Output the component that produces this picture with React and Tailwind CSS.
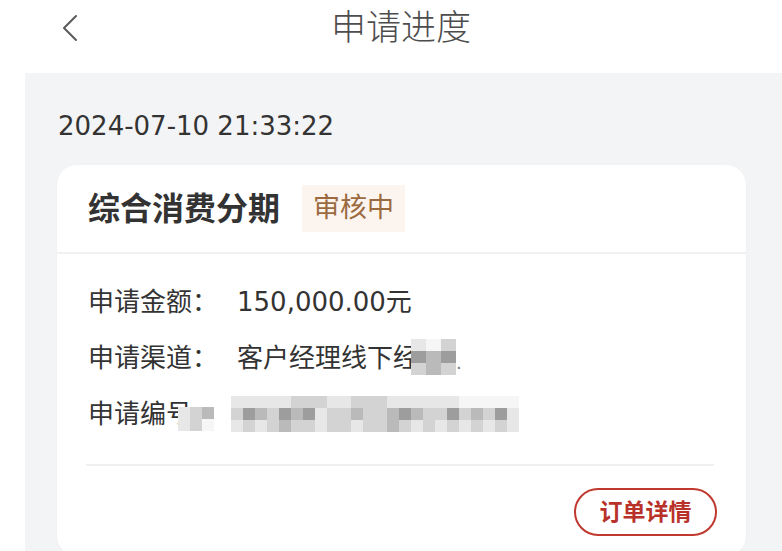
const shade = {
  "0": "bg-[#f6f6f6]",
  "1": "bg-[#e7e7e7]",
  "2": "bg-[#d3d3d3]",
  "3": "bg-[#bababa]",
  "4": "bg-[#9d9d9d]",
};

function Mosaic({ rows, cell = "w-[12px] h-[12px]" }) {
  return (
    <div className="flex flex-col blur-[0.5px]">
      {rows.map((row, i) => (
        <div key={i} className="flex">
          {row.split("").map((c, j) => (
            <div key={j} className={`${cell} ${shade[c]}`} />
          ))}
        </div>
      ))}
    </div>
  );
}

function InfoRow({ label, children }) {
  return (
    <div className="flex items-center h-[56px]">
      <span className="w-[149px] shrink-0">{label}</span>
      {children}
    </div>
  );
}

export default function App() {
  return (
    <div
      className="w-[782px] h-[551px] overflow-hidden bg-white text-[#333333]"
      style={{ fontFamily: "'DejaVu Sans', 'Noto Sans CJK SC', sans-serif" }}
    >
      {/* Top bar */}
      <header className="relative h-[73px] flex items-center justify-center">
        <svg
          className="absolute left-[60px] top-[14px]"
          width="20"
          height="28"
          viewBox="0 0 20 28"
          fill="none"
          stroke="#5a5a5a"
          strokeWidth="2"
          strokeLinecap="round"
          strokeLinejoin="round"
        >
          <path d="M16 2 L4 14 L16 26" />
        </svg>
        <h1 className="text-[35px] font-light text-[#4d4d4d] -mt-[16px] ml-[20px]">申请进度</h1>
      </header>

      {/* Gray content area */}
      <main className="ml-[25px] h-[478px] bg-[#f3f4f6] pl-[32px] pr-[36px]">
        <div className="h-[92px] pt-[34px] pl-[1px]">
          <span className="text-[26px] text-[#333333]">2024-07-10 21:33:22</span>
        </div>

        <section className="bg-white rounded-[20px] shadow-[0_1px_3px_rgba(0,0,0,0.03)]">
          <div className="h-[89px] flex items-center pl-[31px] border-b-2 border-[#f1f1f1]">
            <h2 className="text-[32px] font-bold text-[#333333]">综合消费分期</h2>
            <span className="ml-[22px] h-[47px] px-[11px] flex items-center bg-[#fcf4ee] text-[#9b6a3f] text-[27px]">
              审核中
            </span>
          </div>

          <div className="px-[31px] pt-[20px] text-[26px]">
            <InfoRow label="申请金额：">
              <span>150,000.00元</span>
            </InfoRow>
            <InfoRow label="申请渠道：">
              <span>客户经理线下经</span>
              <div className="-ml-[8px] -mt-[2px]">
                <Mosaic
                  cell="w-[15px] h-[12px]"
                  rows={["102", "434", "232"]}
                />
              </div>
              <span className="text-[18px] text-[#777777] mt-[8px]">.</span>
            </InfoRow>
            <div className="flex items-center h-[56px]">
              <span>申请编号</span>
              <div className="-ml-[14px] mt-[10px]">
                <Mosaic rows={["123", "120"]} />
              </div>
              <div className="ml-[17px]">
                <Mosaic
                  rows={[
                    "111112221122211111100000",
                    "243243412232234322423241",
                    "121232212212232121212121",
                  ]}
                />
              </div>
            </div>

            <div className="mt-[22px] mr-[1px] -ml-[2px] border-t-2 border-[#f0f0f0]" />

            <div className="flex justify-end pt-[22px] pb-[20px] -mr-[2px]">
              <button className="h-[48px] w-[143px] rounded-full border-2 border-[#c0392f] text-[#b83229] text-[23px] font-bold">
                订单详情
              </button>
            </div>
          </div>
        </section>
      </main>
    </div>
  );
}
